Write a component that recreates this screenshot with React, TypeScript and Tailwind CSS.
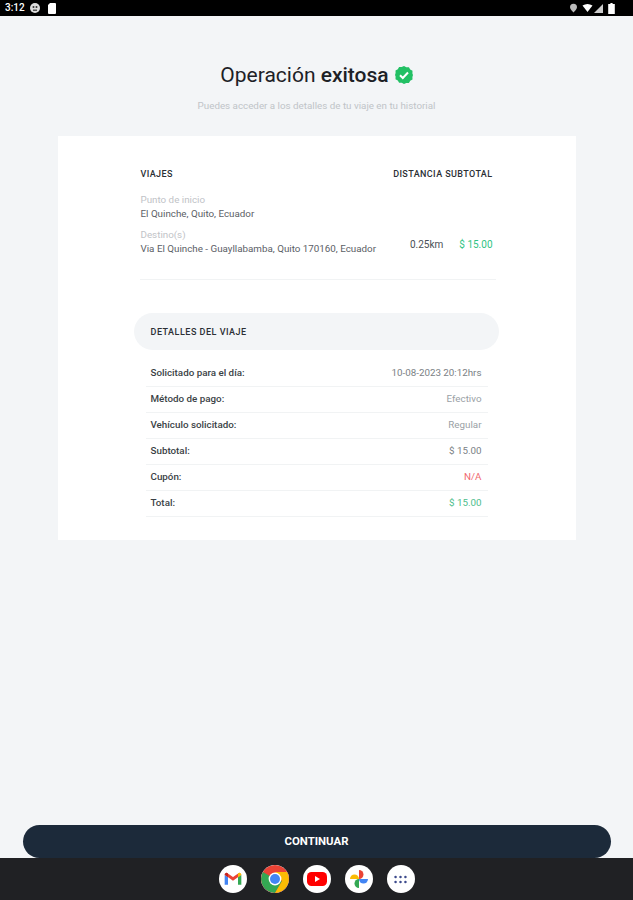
const font = { fontFamily: '"Roboto", "Liberation Sans", sans-serif' };

function Row({ label, value, color, bold = true }: { label: string; value: string; color: string; bold?: boolean }) {
  return (
    <div className="flex h-[26px] items-center justify-between border-b border-[#f1f3f4] pl-[5px] pr-[6px] text-[9.8px]">
      <span className={bold ? "font-medium text-[#3a3f45]" : "text-[#3a3f45]"}>{label}</span>
      <span className={color}>{value}</span>
    </div>
  );
}

function Gmail() {
  return (
    <svg viewBox="0 0 24 24" className="h-[20px] w-[20px]">
      <path d="M2 7v12h4V10z" fill="#4285F4" />
      <path d="M18 10v9h4V7z" fill="#34A853" />
      <path d="M2 7l10 7 10-7-2.5-2.500L12 9.500 4.500 4.500z" fill="#EA4335" />
      <path d="M2 7l4 3V5.500L4.500 4.500C3 4 2 5.500 2 7z" fill="#C5221F" />
      <path d="M22 7l-4 3V5.500l1.500-1C21 4 22 5.500 22 7z" fill="#FBBC04" />
    </svg>
  );
}

function Chrome() {
  return (
    <svg viewBox="0 0 28 28" className="h-[28px] w-[28px]">
      <circle cx="14" cy="14" r="14" fill="#EA4335" />
      <path d="M14 14L1.900 7A14 14 0 0 0 14 28l7-12z" fill="#34A853" />
      <path d="M14 7h12.100A14 14 0 0 1 14 28l7-12z" fill="#FBBC04" />
      <circle cx="14" cy="14" r="6.400" fill="#fff" />
      <circle cx="14" cy="14" r="5" fill="#4285F4" />
    </svg>
  );
}

function Youtube() {
  return (
    <svg viewBox="0 0 20 20" className="h-[20px] w-[20px]">
      <rect x="0" y="3" width="20" height="14" rx="4.500" fill="#F00" />
      <path d="M8 7l5 3-5 3z" fill="#fff" />
    </svg>
  );
}

function Photos() {
  return (
    <svg viewBox="0 0 20 20" className="h-[20px] w-[20px]">
      <path d="M10 10V1a4.500 4.500 0 0 1 0 9z" fill="#EA4335" />
      <path d="M10 10h9a4.500 4.500 0 0 1-9 0z" fill="#4285F4" />
      <path d="M10 10v9a4.500 4.500 0 0 1 0-9z" fill="#34A853" />
      <path d="M10 10H1a4.500 4.500 0 0 1 9 0z" fill="#FBBC04" />
    </svg>
  );
}

function Apps() {
  return (
    <svg viewBox="0 0 14 10" className="h-[9px] w-[13px]" fill="#3c4a8c">
      {[1.5, 7, 12.5].map((x) =>
        [1.5, 7].map((y) => <circle key={`${x}-${y}`} cx={x} cy={y + 0.7} r="1.4" />),
      )}
    </svg>
  );
}

function Dock({ children }: { children: React.ReactNode }) {
  return <div className="flex h-[28px] w-[28px] items-center justify-center overflow-hidden rounded-full bg-white">{children}</div>;
}

export default function App() {
  return (
    <div style={font} className="flex h-[900px] w-[633px] flex-col overflow-hidden bg-[#f3f5f7]">
      <div className="flex h-[16px] items-center justify-between bg-black pl-[5px] pr-[18px] text-white">
        <div className="flex items-center">
          <span className="w-[21px] text-[10px] font-medium leading-none">3:12</span>
          <svg viewBox="0 0 10 10" className="ml-[4px] h-[10px] w-[10px]">
            <circle cx="5" cy="5" r="5" fill="#ddd" />
            <circle cx="3.500" cy="4" r="1" fill="#333" />
            <circle cx="6.500" cy="4" r="1" fill="#333" />
            <path d="M3 6.500h4v1.500H3z" fill="#555" />
          </svg>
          <svg viewBox="0 0 8 11" className="ml-[8px] h-[11px] w-[8px]" fill="#fff">
            <path d="M2 0h5a1 1 0 0 1 1 1v9a1 1 0 0 1-1 1H1a1 1 0 0 1-1-1V2z" />
          </svg>
        </div>
        <div className="flex items-center">
          <svg viewBox="0 0 8 10" className="h-[10px] w-[7px]" fill="#bbb">
            <path d="M4 0a4 4 0 0 1 4 4c0 2.500-3 5-4 6-1-1-4-3.500-4-6a4 4 0 0 1 4-4z" />
          </svg>
          <svg viewBox="0 0 10 8" className="ml-[5px] h-[8px] w-[11px]" fill="#fff">
            <path d="M0 1.500Q5-1.500 10 1.500L5 8z" />
          </svg>
          <svg viewBox="0 0 8 8" className="ml-[1px] h-[9px] w-[9px]" fill="#ccc">
            <path d="M8 0v8H0z" />
          </svg>
          <svg viewBox="0 0 6 10" className="ml-[5px] h-[11px] w-[7px]" fill="#fff">
            <path d="M2 0h2v1h2v9H0V1h2z" />
          </svg>
        </div>
      </div>

      <div className="flex flex-1 flex-col items-center pt-[47px]">
        <div className="flex h-[24px] items-center gap-[6px] text-[21px] leading-none text-[#1d2126]">
          <span>
            Operación <span className="font-medium">exitosa</span>
          </span>
          <svg viewBox="0 0 18 18" className="h-[18px] w-[18px]">
            <path
              d="M9 0l2.300 1.300 2.600-.1 1.300 2.300 2.300 1.300-.1 2.600L18 9l-.6 1.900.1 2.600-2.300 1.300-1.300 2.300-2.600-.1L9 18l-2.300-1.300-2.600.1-1.300-2.300-2.300-1.300.1-2.600L0 9l.6-1.900-.1-2.600 2.300-1.300 1.300-2.300 2.600.1z"
              fill="#22c064"
            />
            <path d="M5 9.300l2.800 2.700L13 6.500" fill="none" stroke="#fff" strokeWidth="2" />
          </svg>
        </div>
        <p className="mt-[13px] text-[9.8px] leading-[12px] text-[#c0c4c8]">Puedes acceder a los detalles de tu viaje en tu historial</p>

        <div className="mt-[24px] flex h-[404px] w-[518px] flex-col bg-white pl-[76px] pr-[80px] pt-[32px]">
          <div className="flex h-[12px] items-center justify-between pl-[7px] pr-[3px] text-[9px] font-medium leading-none tracking-[0.4px] text-[#2b2f34]">
            <span>VIAJES</span>
            <span>DISTANCIA SUBTOTAL</span>
          </div>
          <div className="mt-[13px] pl-[7px] pr-[3px] text-[9.8px] leading-[14px]">
            <div className="text-[#bfc3c7]">Punto de inicio</div>
            <div className="text-[#5b6066]">El Quinche, Quito, Ecuador</div>
            <div className="mt-[7px] flex items-center justify-between">
              <div>
                <div className="text-[#bfc3c7]">Destino(s)</div>
                <div className="text-[#5b6066]">Via El Quinche - Guayllabamba, Quito 170160, Ecuador</div>
              </div>
              <div className="flex gap-[16px] pt-[6px] text-[10px]">
                <span className="text-[#4a4f55]">0.25km</span>
                <span className="text-[#2fc384]">$ 15.00</span>
              </div>
            </div>
          </div>
          <div className="ml-[6px] mt-[23px] border-b border-[#f1f3f4]" />
          <div className="-mr-[3px] mt-[33px] flex h-[37px] items-center rounded-[19px] bg-[#f3f5f7] pl-[17px] pt-[1px] text-[9px] font-medium leading-none tracking-[0.5px] text-[#2b2f34]">
            DETALLES DEL VIAJE
          </div>
          <div className="ml-[12px] mr-[8px] mt-[11px] flex flex-col">
            <Row label="Solicitado para el día:" value="10-08-2023 20:12hrs" color="text-[#7a7f85]" />
            <Row label="Método de pago:" value="Efectivo" color="text-[#9a9fa5]" />
            <Row label="Vehículo solicitado:" value="Regular" color="text-[#9a9fa5]" />
            <Row label="Subtotal:" value="$ 15.00" color="text-[#7a7f85]" />
            <Row label="Cupón:" value="N/A" color="text-[#f0686f]" />
            <Row label="Total:" value="$ 15.00" color="text-[#4dbd8c]" />
          </div>
        </div>

        <div className="mt-auto flex h-[33px] w-[588px] items-center justify-center rounded-[17px] bg-[#1c2a3a] text-[11.4px] font-bold text-white">
          CONTINUAR
        </div>
      </div>

      <div className="flex h-[42px] items-start justify-center gap-[14px] bg-[#202124] pt-[7px]">
        <Dock><Gmail /></Dock>
        <Dock><Chrome /></Dock>
        <Dock><Youtube /></Dock>
        <Dock><Photos /></Dock>
        <Dock><Apps /></Dock>
      </div>
    </div>
  );
}
